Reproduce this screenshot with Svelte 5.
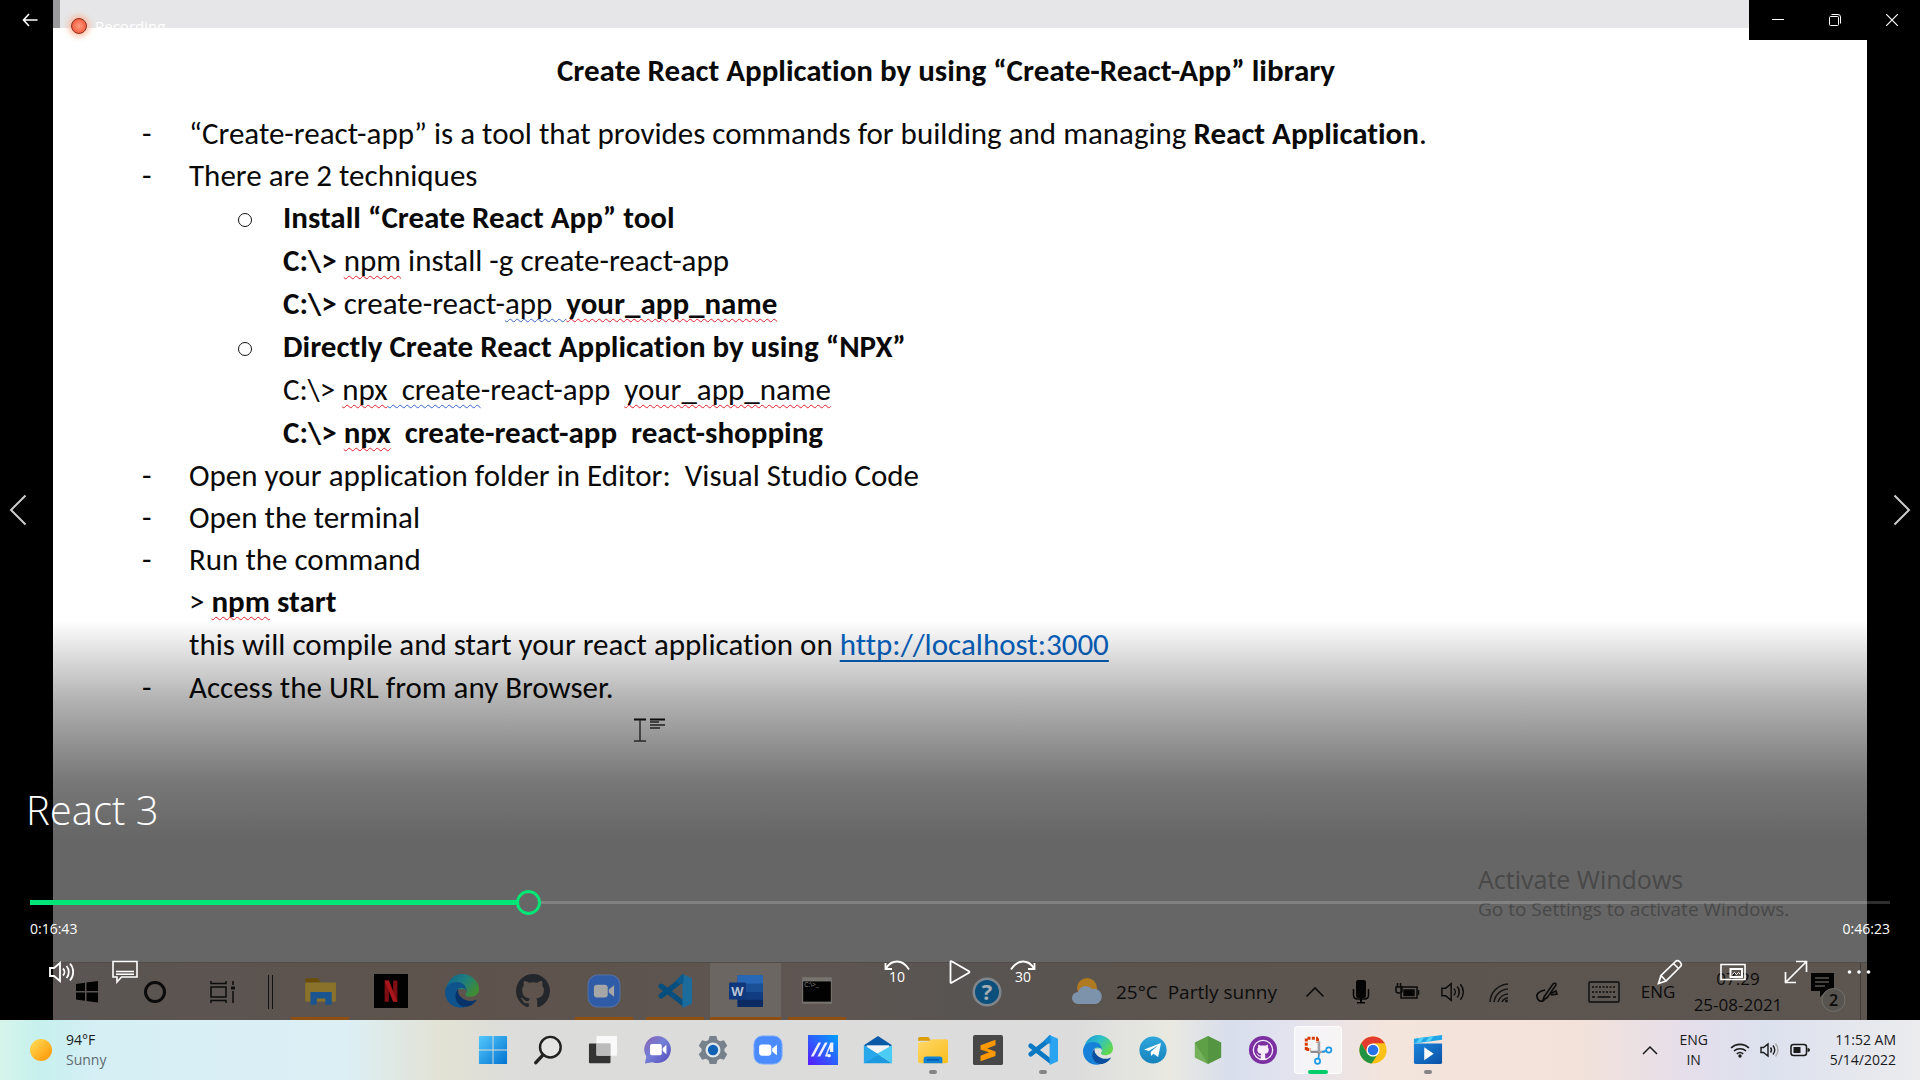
<script>
  let position = $state(265);
  const fill = $derived(position / 10);

  const apps = [
    { id: 'start', label: 'Start' },
    { id: 'search', label: 'Search' },
    { id: 'taskview', label: 'Task View' },
    { id: 'chat', label: 'Chat' },
    { id: 'settings', label: 'Settings' },
    { id: 'zoom', label: 'Zoom' },
    { id: 'myasus', label: 'MyASUS' },
    { id: 'mail', label: 'Mail' },
    { id: 'folder', label: 'File Explorer', open: true },
    { id: 'sublime', label: 'Sublime Text' },
    { id: 'vscode', label: 'Visual Studio Code', open: true },
    { id: 'edge', label: 'Microsoft Edge' },
    { id: 'telegram', label: 'Telegram' },
    { id: 'node', label: 'Node.js' },
    { id: 'github', label: 'GitHub Desktop' },
    { id: 'snip', label: 'Snipping Tool', active: true },
    { id: 'chrome', label: 'Google Chrome' },
    { id: 'movies', label: 'Movies & TV', open: true }
  ];

  const recordedApps = [
    { id: 'folder', open: true },
    { id: 'netflix' },
    { id: 'edge' },
    { id: 'githubmark' },
    { id: 'zoom', open: true },
    { id: 'vscode', open: true },
    { id: 'word', active: true },
    { id: 'cmd', open: true }
  ];
</script>

{#snippet icon(id)}
  <svg class="app-icon" viewBox="0 0 32 32" aria-hidden="true">
    {#if id === 'start'}
      <g fill="url(#g-start)"><path d="M1 2q0-1 1-1h13.500v14.500H1z" /><path d="M16.500 1H30q1 0 1 1v13.500H16.500z" /><path d="M1 16.500h14.500V31H2q-1 0-1-1z" /><path d="M16.500 16.500H31V30q0 1-1 1H16.500z" /></g>
    {:else if id === 'search'}
      <circle cx="18.500" cy="13" r="11" fill="#fff" fill-opacity=".25" stroke="#222" stroke-width="2.600" /><path d="M10.500 21.500L3 29.500" stroke="#222" stroke-width="3.600" stroke-linecap="round" />
    {:else if id === 'taskview'}
      <rect x="1" y="9" width="23" height="21" rx="1" fill="#333" /><rect x="9" y="1" width="22" height="21" rx="1" fill="#fff" fill-opacity=".82" /><path d="M9 9h15v13H9z" fill="#bbb" />
    {:else if id === 'chat'}
      <path d="M16 1a14.500 14.500 0 1 1-6 28L2 30.500 3.500 23A14.500 14.500 0 0 1 16 1z" fill="url(#g-chat)" /><rect x="7.500" y="9.500" width="12.500" height="12" rx="2" fill="#fff" /><path d="M21 14l4-3.500v10L21 17z" fill="#fff" />
    {:else if id === 'settings'}
      <path d="M12.500 1h7l1.300 4.200 2.700 1.500 4.200-1.200 3.500 6-3 3.200v2.600l3 3.200-3.500 6-4.200-1.200-2.700 1.500L19.500 31h-7l-1.300-4.200-2.700-1.500-4.200 1.200-3.500-6 3-3.200v-2.600l-3-3.200 3.500-6 4.200 1.200 2.700-1.500z" fill="#76818b" /><circle cx="16" cy="16" r="8" fill="#dfe6ec" /><circle cx="16" cy="16" r="5.500" fill="#1062b4" />
    {:else if id === 'zoom'}
      <rect x="1" y="1" width="30" height="30" rx="9" fill="#4a8cff" stroke="#7eaeff" /><rect x="6.500" y="10" width="13" height="12" rx="3" fill="#fff" /><path d="M20.500 14.500l5-4v11l-5-4z" fill="#fff" />
    {:else if id === 'myasus'}
      <path d="M0 0h32v32H0z" fill="url(#g-asus)" /><path d="M3 23L11 8h3L6 23zM10 23L18 8h3L13 23zM18 23L24 8h3v10h-3.500v-4L21 19v4z" fill="#eef" /><circle cx="22.500" cy="22" r="1.800" fill="#fff" />
    {:else if id === 'mail'}
      <path d="M1 11L16 1l15 10-15 8z" fill="#0a5aa8" /><path d="M4 11h24v9H4z" fill="#f2f4f6" /><path d="M1 11v19h30z" fill="#1c9ae0" /><path d="M31 11v19L15 20z" fill="#4accf5" /><path d="M1 11l16 10L1 30z" fill="#28a8ea" />
    {:else if id === 'folder'}
      <path d="M0 4q0-2 2-2h9l3 4H0z" fill="#dd9d06" /><path d="M0 8l11-1 4-2.500h15q2 0 2 2V28q0 2-2 2H2q-2 0-2-2z" fill="url(#g-folder)" /><path d="M6 30v-4q0-3 3-3h14q3 0 3 3v4z" fill="#0c82d6" /><path d="M9.500 26.500h13" stroke="#07539c" stroke-width="1.400" />
    {:else if id === 'oldfolder'}
      <path d="M2 6q0-2 2-2h10l3 4H2z" fill="#6b4d08" /><path d="M2 8h29v18H2z" fill="#8a722a" /><path d="M7 29V17h20v12h-6v-6h-8v6z" fill="#1b5590" />
    {:else if id === 'sublime'}
      <rect width="32" height="32" rx="2" fill="#474747" /><path d="M8 11l16-6v6l-9 3.500 9 3v5L8 28v-6l9-3.500-9-3z" fill="#ff9800" />
    {:else if id === 'vscode'}
      <path d="M23.500 4.500L3 20.500M23.500 27.500L3 11.500" stroke="#0a78c2" stroke-width="5" stroke-linecap="round" /><path d="M23 0l9 4v24l-9 4z" fill="#2aa4f0" /><path d="M23 0l1 0v9l-5 0-2-3z" fill="#148ad8" />
    {:else if id === 'edge'}
      <path d="M1 15C1.500 7 8 0 16 0c9 0 16 7 16 14 0 5-4 7.500-8.500 7.500-3 0-4.500-1-4.500-2.500 1-1.500 2-2 1-5z" fill="url(#g-edge)" /><path d="M0 17c0-6 5-9.500 11-9.500 7 0 9.500 5 9 9-.5-2.500-2.500-3.500-4.500-3.500-4 0-6 4-5 8.500 1 5 5 8.500 9 9.500C9 34 0 27 0 17z" fill="#1780d8" /><path d="M12.500 14c-4 4-3.500 11 1 15 5 4 13 1.500 16.500-5-3 1.500-7 2-10.500.500-5-2-8-5.500-7-10.500z" fill="#0c4fa0" />
    {:else if id === 'telegram'}
      <circle cx="16" cy="16" r="14.500" fill="url(#g-tele)" /><path d="M6.500 15.500L24.500 8.500 21.500 23.500l-5-3.500-2.500 2.500-.5-4.500 8-7-10 6z" fill="#fff" />
    {:else if id === 'node'}
      <path d="M16 1l14 7v16l-14 7-14-7V8z" fill="#5da046" /><path d="M16 1l14 7v16l-14 7z" fill="#4a8a3a" fill-opacity=".5" /><path d="M2 8l14 23-14-7z" fill="#83bd68" fill-opacity=".6" />
    {:else if id === 'github'}
      <circle cx="16" cy="16" r="15" fill="#7b2fa0" /><circle cx="16" cy="16" r="11" fill="#f6ecfa" /><g transform="translate(6.500 6.500) scale(1.190)">{@render cat('#7b2fa0')}</g>
    {:else if id === 'githubmark'}
      <g transform="scale(2)">{@render cat('#23272c')}</g>
    {:else if id === 'snip'}
      <path d="M3.500 16V3.500H16M3.500 15.500h5M15.500 3.500v5" fill="none" stroke="#d83b01" stroke-width="3.200" stroke-dasharray="3.200 1.400" /><path d="M17 7v14M8 18h15" stroke="#8a8d91" stroke-width="2.600" /><path d="M17 7v11h10" stroke="#b8bbbf" stroke-width="1" fill="none" /><circle cx="27.500" cy="16" r="2.800" fill="none" stroke="#1c9ae8" stroke-width="1.800" /><circle cx="15.500" cy="28" r="2.800" fill="none" stroke="#1c9ae8" stroke-width="1.800" /><path d="M16.500 25l.5-4M24.500 17l-4 1" stroke="#1c9ae8" stroke-width="1.800" />
    {:else if id === 'chrome'}
      <circle cx="16" cy="16" r="14.500" fill="#fbc116" /><path d="M3.400 8.800A14.500 14.500 0 0 1 28.600 8.800H16L10 19.500z" fill="#e33b2e" /><path d="M3.400 8.800L10 19.700 16 23l-3 7.200A14.500 14.500 0 0 1 3.400 8.800z" fill="#229342" /><path d="M10 19.500l6 3.500 4-1-5.500 8.400-3-.600z" fill="#229342" /><circle cx="16" cy="16" r="7" fill="#fff" /><circle cx="16" cy="16" r="5.600" fill="#2a72e8" />
    {:else if id === 'movies'}
      <path d="M1 9h30v20q0 2-2 2H3q-2 0-2-2z" fill="url(#g-movie)" /><path d="M1 4L31 0v5L1 9z" fill="#1fa5e8" /><path d="M7 3.200L12 2.500 8 8 3 8.700zM17 2L22 1.300 18 6.700l-5 .700z" fill="#53d0f8" /><path d="M12 13l10 7-10 7z" fill="#fff" />
    {:else if id === 'netflix'}
      <path d="M0 0h32v32H0z" fill="#030202" /><path d="M10 6h4v20h-4zM18 6h4v20h-4z" fill="#7f0d12" /><path d="M10 6h4l8 20h-4z" fill="#a8161c" />
    {:else if id === 'word'}
      <path d="M8 1h24v30H8z" fill="#1b4f96" /><path d="M8 1h24v8H8z" fill="#2867b5" /><path d="M8 17h24v7H8z" fill="#123c82" /><path d="M8 24h24v7H8z" fill="#0b2a62" /><rect y="8" width="16" height="16" rx="1" fill="#10387c" /><text x="8" y="20.500" text-anchor="middle" font-size="12" font-weight="700" fill="#b8c4d4">W</text>
    {:else if id === 'cmd'}
      <rect x="2" y="3" width="28" height="25" fill="#77736f" /><rect x="3" y="7" width="26" height="19" fill="#020202" /><text x="4" y="12" font-size="6" fill="#8d8d8d">C:\&gt;_</text>
    {/if}
  </svg>
{/snippet}

{#snippet cat(color)}
  <path fill={color} d="M8 0C3.580 0 0 3.580 0 8c0 3.540 2.290 6.530 5.470 7.590.4.070.55-.17.55-.38 0-.19-.01-.82-.01-1.490-2.010.37-2.530-.49-2.690-.94-.09-.23-.48-.94-.82-1.130-.28-.15-.68-.52-.01-.53.63-.01 1.080.58 1.230.82.72 1.210 1.870.87 2.330.66.07-.52.28-.87.51-1.070-1.780-.2-3.640-.89-3.640-3.950 0-.87.31-1.590.82-2.150-.08-.2-.36-1.020.08-2.120 0 0 .67-.21 2.200.82.64-.18 1.320-.27 2-.27s1.360.09 2 .27c1.530-1.040 2.200-.82 2.200-.82.44 1.100.16 1.920.08 2.120.51.56.82 1.270.82 2.150 0 3.070-1.870 3.750-3.650 3.950.29.25.54.73.54 1.480 0 1.070-.01 1.930-.01 2.200 0 .21.15.46.55.38A8.010 8.010 0 0 0 16 8c0-4.420-3.580-8-8-8z" />
{/snippet}

{#snippet speaker()}
  <path d="M1 9h4l6-5v18l-6-5H1z" /><path d="M14 9.500a5 5 0 0 1 0 7M17.500 7a9 9 0 0 1 0 12M21 4.500a13 13 0 0 1 0 17" />
{/snippet}

<svg class="defs" aria-hidden="true">
  <defs>
    <linearGradient id="g-start" gradientUnits="userSpaceOnUse" x1="0" y1="0" x2="32" y2="32"><stop offset="0" stop-color="#55cbff" /><stop offset="1" stop-color="#0070cf" /></linearGradient>
    <linearGradient id="g-chat" x1="0" y1="0" x2="1" y2="1"><stop offset="0" stop-color="#8a5fae" /><stop offset=".45" stop-color="#7480d8" /><stop offset="1" stop-color="#5348b8" /></linearGradient>
    <linearGradient id="g-asus" x1="0" y1="1" x2="1" y2="0"><stop offset="0" stop-color="#5a1aff" /><stop offset="1" stop-color="#00a2ff" /></linearGradient>
    <linearGradient id="g-folder" x1="0" y1="0" x2="1" y2="1"><stop offset="0" stop-color="#ffd96a" /><stop offset="1" stop-color="#f9bd1e" /></linearGradient>
    <linearGradient id="g-edge" x1="0" y1="0" x2="1" y2=".6"><stop offset="0" stop-color="#1990d8" /><stop offset=".5" stop-color="#2cc0c8" /><stop offset="1" stop-color="#62d84e" /></linearGradient>
    <linearGradient id="g-tele" x1="0" y1="0" x2="0" y2="1"><stop offset="0" stop-color="#2fa6dc" /><stop offset="1" stop-color="#1682bc" /></linearGradient>
    <linearGradient id="g-movie" x1="0" y1="0" x2="1" y2="1"><stop offset="0" stop-color="#1a84dc" /><stop offset="1" stop-color="#0b51a6" /></linearGradient>
    <linearGradient id="g-sun" x1="0" y1="0" x2="1" y2="1"><stop offset="0" stop-color="#ffdf5a" /><stop offset="1" stop-color="#ff9200" /></linearGradient>
  </defs>
</svg>

<div class="desktop">
  <main class="stage">
    <article class="document">
      <div class="ribbon"></div>
      <div class="page">
        <h1>Create React Application by using “Create-React-App” library</h1>
        <ul class="outline">
          <li>“Create-react-app” is a tool that provides commands for building and managing <b>React Application</b>.</li>
          <li>There are 2 techniques
            <ul class="sub">
              <li><b>Install “Create React App” tool</b>
                <p><b>C:\&gt;</b> <span class="typo">npm</span> install -g create-react-app</p>
                <p><b>C:\&gt;</b> create-react-<span class="grammar">app&nbsp;&nbsp;</span><b class="typo">your_app_name</b></p>
              </li>
              <li><b>Directly Create React Application by using “NPX”</b>
                <p>C:\&gt; <span class="typo">npx</span><span class="grammar">&nbsp; create</span>-react-app&nbsp; <span class="typo">your_app_name</span></p>
                <p><b>C:\&gt; <span class="typo">npx</span>&nbsp; create-react-app&nbsp; react-shopping</b></p>
              </li>
            </ul>
          </li>
          <li>Open your application folder in Editor:&nbsp; Visual Studio Code</li>
          <li>Open the terminal</li>
          <li>Run the command
            <p>&gt; <b><span class="typo">npm</span> start</b></p>
            <p>this will compile and start your react application on <a href="http://localhost:3000">http://localhost:3000</a></p>
          </li>
          <li>Access the URL from any Browser.</li>
        </ul>
      </div>
      <div class="recording"><span class="rec-dot"></span>Recording</div>
      <svg class="caret" viewBox="0 0 32 26" aria-hidden="true"><path d="M0 1.500h12M16 1.500h15" stroke="#111" stroke-width="2" /><path d="M6 2v21M0 23h12" stroke="#444" stroke-width="1.500" /><path d="M16 4h9M16 7h15M16 10h10" stroke="#333" stroke-width="1.300" /></svg>
    </article>

    <div class="shade"></div>

    <section class="recorded" aria-label="Recorded desktop">
      <div class="watermark"><strong>Activate Windows</strong><span>Go to Settings to activate Windows.</span></div>
      <div class="recbar">
        <span class="cell sys"><svg width="24" height="24" viewBox="0 0 24 24"><path d="M1 4l9-1.300V11H1zM11.500 2.500L23 1v10H11.500zM1 12.500h9v8.300L1 19.500zM11.500 12.500H23v10L11.500 21z" fill="#020202" /></svg></span>
        <span class="cell sys"><svg width="24" height="24" viewBox="0 0 24 24"><circle cx="12" cy="12" r="9.500" fill="none" stroke="#0a0a0a" stroke-width="3" /></svg></span>
        <span class="cell sys"><svg width="26" height="24" viewBox="0 0 26 24" fill="none" stroke="#0c0c0c" stroke-width="1.500"><path d="M1 7h15v10H1zM1 1v2.500h15V1M1 23v-2.500h15V23M23 1v4M23 11v12" /><path d="M21 8h4" stroke-width="3" /></svg></span>
        <span class="cell divider"></span>
        {#each recordedApps as app}
          <span class="cell rec-app {app.id}" class:open={app.open} class:active={app.active}>{@render icon(app.id === 'folder' ? 'oldfolder' : app.id)}</span>
        {/each}
        <span class="cell help"><svg width="32" height="32" viewBox="0 0 32 32"><circle cx="16" cy="16" r="14.500" fill="#80878c" /><circle cx="16" cy="16" r="12" fill="#0b4f7c" /><text x="16" y="24" text-anchor="middle" font-size="22" font-weight="700" fill="#a6adb3">?</text></svg></span>
        <span class="cell forecast"><svg width="32" height="32" viewBox="0 0 32 32"><circle cx="16" cy="12" r="10" fill="#b07a20" /><path d="M7 28a6 6 0 0 1 0-12 8 8 0 0 1 14-3 7 7 0 0 1 4 15z" fill="#7d93ab" /></svg>25°C&nbsp; Partly sunny</span>
        <span class="cell tray"><svg width="20" height="12" viewBox="0 0 20 12" fill="none" stroke="#0c0c0c" stroke-width="1.600"><path d="M1.500 10.500L10 2l8.500 8.500" /></svg></span>
        <span class="cell tray"><svg width="18" height="24" viewBox="0 0 18 24" fill="#050505"><rect x="4" width="10" height="18" rx="2" /><path d="M1.500 9v6q0 4 4 4h7q4 0 4-4V9" fill="none" stroke="#050505" stroke-width="1.500" /><path d="M8 18h2v5H8zM5 22h8v1.500H5z" /></svg></span>
        <span class="cell tray"><svg width="26" height="20" viewBox="0 0 26 20" fill="none" stroke="#0a0a0a" stroke-width="1.500"><rect x="7" y="5" width="16" height="11" /><path d="M24.500 8v5" /><path d="M10 8h10v5.500H10z" fill="#050505" /><path d="M2 5v4q0 2 3 2t3-2V5zM3.500 1v4M6.500 1v4" /></svg></span>
        <span class="cell tray"><svg width="26" height="24" viewBox="0 0 26 26" fill="none" stroke="#0c0c0c" stroke-width="1.600">{@render speaker()}</svg></span>
        <span class="cell tray"><svg width="22" height="22" viewBox="0 0 22 22" fill="none" stroke="#141414" stroke-width="1.600"><path d="M2 21A19 19 0 0 1 20 3M6 21A15 15 0 0 1 20 8M10 21A11 11 0 0 1 20 13M14 21a7 7 0 0 1 6-4" /><circle cx="18.500" cy="20" r="1.500" fill="#141414" stroke="none" /></svg></span>
        <span class="cell pen"><svg width="24" height="22" viewBox="0 0 24 22" fill="none" stroke="#0c0c0c" stroke-width="1.600"><path d="M9 16L18 3q3-2 3 1l-9 13-4 2zM10 9q-9 2-8 7 1 5 6 4l4-4M15 13l6-3 1 3-6 1" /></svg></span>
        <span class="cell keyboard"><svg width="32" height="22" viewBox="0 0 32 22" fill="none" stroke="#0c0c0c" stroke-width="1.400"><rect x="1" y="1" width="30" height="20" rx="1" /><path d="M4 6h24M4 11h24" stroke-dasharray="2 1.500" /><path d="M4 16h3M9.500 16h13M25 16h3" /></svg></span>
        <span class="cell lang">ENG</span>
        <span class="cell rec-clock"><span>07:29</span><span>25-08-2021</span></span>
        <span class="cell notice"><svg width="36" height="44" viewBox="0 0 36 44"><path d="M1 3h23v18h-8l-6 6v-6H1z" fill="#030303" /><path d="M5 8h14M5 12h14M5 16h10" stroke="#5a5552" stroke-width="1.300" /><circle cx="23.500" cy="30" r="11.500" fill="#57534f" stroke="#74706c" /><text x="23.500" y="35.500" text-anchor="middle" font-size="16" font-weight="600" fill="#0a0a0a">2</text></svg></span>
        <span class="cell corner"></span>
      </div>
    </section>

    <header class="topbar">
      <button class="back" aria-label="Back"><svg width="16" height="14" viewBox="0 0 16 14" fill="none" stroke="#fff" stroke-width="1.600"><path d="M15.500 7H1.500M7 1L1.500 7 7 13" /></svg></button>
      <div class="window-controls">
        <button aria-label="Minimise"><svg width="12" height="12" viewBox="0 0 12 12"><path d="M0 5.500h12" stroke="#fff" stroke-width="1" /></svg></button>
        <button aria-label="Restore"><svg width="12" height="12" viewBox="0 0 12 12" fill="none" stroke="#fff" stroke-width="1"><rect x=".5" y="2.500" width="9" height="9" rx="1" /><path d="M2.500.5h6.500q2.500 0 2.500 2.500V9.500" /></svg></button>
        <button aria-label="Close"><svg width="12" height="12" viewBox="0 0 12 12" stroke="#fff" stroke-width="1.200"><path d="M0 0l12 12M12 0L0 12" /></svg></button>
      </div>
    </header>

    <nav class="flip" aria-label="Videos">
      <button aria-label="Previous"><svg width="18" height="32" viewBox="0 0 18 32" fill="none" stroke="#ccc" stroke-width="2"><path d="M16.500 1.500L2 16l14.500 14.500" /></svg></button>
      <button aria-label="Next"><svg width="18" height="32" viewBox="0 0 18 32" fill="none" stroke="#ccc" stroke-width="2"><path d="M1.500 1.500L16 16 1.500 30.500" /></svg></button>
    </nav>

    <section class="player" aria-label="Player">
      <h2>React 3</h2>
      <input class="seek" type="range" min="0" max="1000" aria-label="Seek" bind:value={position} style="--fill: {fill}%" />
      <div class="times"><time>0:16:43</time><time>0:46:23</time></div>
      <div class="controls">
        <div class="group">
          <button aria-label="Volume"><svg width="26" height="26" viewBox="0 0 26 26" fill="none" stroke="#fff" stroke-width="1.800">{@render speaker()}</svg></button>
          <button aria-label="Captions"><svg width="26" height="24" viewBox="0 0 26 24" fill="none" stroke="#fff" stroke-width="1.600"><path d="M1 1.500h24v15.500H9.500L5 22v-5H1zM4 11.500h18M4 14.200h18" /></svg></button>
        </div>
        <div class="group">
          <button class="skip" aria-label="Skip back 10 seconds"><svg width="26" height="10" viewBox="0 0 26 10" fill="none" stroke="#fff" stroke-width="1.800"><path d="M1.500 3v6h6.500M2 8.500Q6 1.500 13 1.500T25 9.500" /></svg><span>10</span></button>
          <button aria-label="Play"><svg width="22" height="24" viewBox="0 0 22 24" fill="none" stroke="#fff" stroke-width="1.800" stroke-linejoin="round"><path d="M1.500 2q0-1.500 1.500-.5L20 11.300q1 .700 0 1.400L3 22.500q-1.500 1-1.500-.5z" /></svg></button>
          <button class="skip" aria-label="Skip forward 30 seconds"><svg width="26" height="10" viewBox="0 0 26 10" fill="none" stroke="#fff" stroke-width="1.800"><path d="M24.500 3v6H18M24 8.500Q20 1.500 13 1.500T1 9.500" /></svg><span>30</span></button>
        </div>
        <div class="group end">
          <button aria-label="Edit"><svg width="26" height="26" viewBox="0 0 26 26" fill="none" stroke="#fff" stroke-width="1.700"><path d="M1.500 24.500L4 16.500 18.500 2.500q2-2 4.500.5t.5 4.500L9 22zM4 16.500L9 22M16.500 4.500l5 5" /></svg></button>
          <button aria-label="Play in mini view"><svg width="26" height="18" viewBox="0 0 26 18" fill="none" stroke="#fff" stroke-width="1.600"><path d="M1 1.500h24v15H1z" /><path d="M10.500 6h11.500v8H10.500z" stroke-width="2" /><path d="M12 11.500l2.500-2 2 2 2-2 1.500 1.500" stroke-width="1" /></svg></button>
          <button aria-label="Full screen"><svg width="24" height="24" viewBox="0 0 24 24" fill="none" stroke="#fff" stroke-width="1.700"><path d="M1.500 22.500l21-21M12 1.500h10.500V12M1.500 12v10.500H12" /></svg></button>
          <button aria-label="More"><svg width="24" height="6" viewBox="0 0 24 6" fill="#fff"><circle cx="2.500" cy="3" r="1.800" /><circle cx="12" cy="3" r="1.800" /><circle cx="21.500" cy="3" r="1.800" /></svg></button>
        </div>
      </div>
    </section>
  </main>

  <footer class="taskbar">
    <button class="weather"><svg width="24" height="24" viewBox="0 0 24 24" aria-hidden="true"><circle cx="12" cy="12" r="11" fill="url(#g-sun)" /></svg><span class="stack"><span>94°F</span><span class="muted">Sunny</span></span></button>
    <div class="apps">
      {#each apps as app}
        <button aria-label={app.label} class:open={app.open} class:active={app.active}><span class="tile">{@render icon(app.id)}</span></button>
      {/each}
    </div>
    <div class="status">
      <button aria-label="Hidden icons"><svg width="16" height="10" viewBox="0 0 16 10" fill="none" stroke="#1a1a1a" stroke-width="1.500"><path d="M1 9l7-7 7 7" /></svg></button>
      <button class="stack center language"><span>ENG</span><span>IN</span></button>
      <button class="quick" aria-label="Network, volume and battery">
        <svg width="20" height="16" viewBox="0 0 20 16" fill="none" stroke="#1a1a1a" stroke-width="1.600"><path d="M1 6a13 13 0 0 1 18 0M4 9a9 9 0 0 1 12 0M6.800 11.800a5 5 0 0 1 6.400 0" /><circle cx="10" cy="14" r="1.700" fill="#1a1a1a" stroke="none" /></svg>
        <svg width="20" height="16" viewBox="0 0 20 16" fill="none" stroke="#1a1a1a" stroke-width="1.400"><path d="M1 5.500h2.500L8 2v12l-4.500-3.500H1zM10.500 5.500q2 2.500 0 5M13 3.500q3.500 4.500 0 9" /><path d="M15.500 1.500q5 6.500 0 13" stroke="#aaa" /></svg>
        <svg width="20" height="14" viewBox="0 0 20 14"><rect x="1" y="1.500" width="15.500" height="11" rx="2.500" fill="none" stroke="#1a1a1a" stroke-width="1.500" /><path d="M3.500 4h7v6h-7zM17.500 5q2.500 0 2.500 2t-2.500 2z" fill="#1a1a1a" /></svg>
      </button>
      <button class="stack right"><span>11:52 AM</span><span>5/14/2022</span></button>
    </div>
  </footer>
</div>

<style>
  :global(body) { margin: 0; background: #000; }
  .desktop { display: grid; grid-template-rows: 1fr auto; min-height: 100vh; font-family: "Open Sans", "Noto Sans", sans-serif; font-size: 14px; line-height: 20px; }
  .defs { position: absolute; width: 0; height: 0; }
  button { border: 0; padding: 0; background: none; color: inherit; font: inherit; display: flex; align-items: center; justify-content: center; }
  .stage { display: grid; background: #000; }
  .stage > * { grid-area: 1 / 1; min-width: 0; z-index: 1; }

  .stage > .document { z-index: 0; }
  .document { position: relative; margin: 0 53px; background: #fff; color: #0a0a0a; font-family: Carlito, Lato, sans-serif; font-size: 31px; line-height: 42px; font-variant-ligatures: none; }
  .ribbon { height: 28px; background: #e6e6e8; border-left: 7px solid #9a9a9c; box-sizing: border-box; }
  .page { padding: 21px 117px 0 89px; }
  h1 { margin: 0 0 21px; font-size: 31px; line-height: 42px; text-align: center; }
  ul { list-style: none; margin: 0; padding: 0; }
  p { margin: 0; line-height: 43px; }
  .outline > li { position: relative; padding-left: 47px; }
  .outline > li::before { content: "-"; position: absolute; left: 0; }
  .sub { line-height: 43px; }
  .sub > li { position: relative; padding-left: 94px; }
  .sub > li::before { content: ""; position: absolute; left: 49px; top: 17px; width: 12px; height: 12px; border: 1px solid #111; border-radius: 50%; }
  .typo, .grammar { text-decoration: underline wavy #e0242c 1px; text-underline-offset: 4px; text-decoration-skip-ink: none; }
  .grammar { text-decoration-color: #3a66cc; }
  .document a { color: #0563c1; text-decoration-thickness: 2px; text-underline-offset: 5px; text-decoration-skip-ink: none; }
  .recording { position: absolute; left: 18px; top: 14px; display: flex; align-items: center; gap: 8px; color: #fff; font: 15px/24px "Open Sans", sans-serif; }
  .rec-dot { width: 14px; height: 14px; border: 1px solid #8c2a18; border-radius: 50%; background: radial-gradient(#ff9d80, #f0472a); box-shadow: 0 0 6px 2px #ffb08f; }
  .caret { position: absolute; left: 581px; top: 718px; width: 32px; height: 26px; }
  .shade { margin: 0 53px; background: linear-gradient(to top, rgb(0 0 0 / .6) 182px, rgb(0 0 0 / .53) 240px, rgb(0 0 0 / .42) 280px, rgb(0 0 0 / .3) 320px, rgb(0 0 0 / 0) 400px); }

  .recorded { align-self: end; margin: 0 53px; }
  .watermark { display: flex; flex-direction: column; align-items: start; width: 389px; margin: 0 0 39px auto; color: #484848; font-size: 19px; line-height: 28px; }
  .watermark strong { font-size: 25px; font-weight: 400; line-height: 32px; }
  .recbar { display: flex; height: 58px; background: linear-gradient(90deg, #5a5553, #5e534c 24%, #5e5652 42%, #585452 50%, #5c544e 62%, #5d5650); border-top: 1px solid #4f4c4a; box-sizing: border-box; color: #0c0c0c; font-size: 17px; }
  .cell { display: flex; align-items: center; justify-content: center; flex: none; }
  .sys { width: 68px; }
  .divider { width: 27px; }
  .divider::before { content: ""; width: 3px; height: 34px; border: solid #111; border-width: 0 1px; }
  .rec-app { width: 71px; box-sizing: border-box; padding-bottom: 1px; }
  .rec-app :global(.app-icon) { width: 34px; height: 34px; }
  .edge :global(svg), .zoom :global(svg), .vscode :global(svg) { filter: brightness(.65); }
  .open.rec-app { background: linear-gradient(#8f4e12, #8f4e12) center bottom / 58px 3px no-repeat; }
  .active.rec-app { background: linear-gradient(#8f4e12, #8f4e12) center bottom / 100% 3px no-repeat, #6b6661; }
  .help { width: 54px; margin-left: auto; }
  .forecast { width: 278px; gap: 13px; padding-left: 42px; box-sizing: border-box; font-size: 19px; }
  .tray { width: 46px; }
  .pen { width: 50px; }
  .keyboard { width: 64px; }
  .lang { width: 44px; }
  .rec-clock { width: 116px; flex-direction: column; line-height: 26px; }
  .notice { width: 64px; }
  .corner { width: 7px; box-sizing: border-box; border-left: 1px solid #3d3a38; }

  .topbar { align-self: start; display: flex; justify-content: space-between; }
  .back { width: 60px; height: 40px; }
  .window-controls { display: flex; background: #000; }
  .window-controls button { width: 57px; height: 40px; }
  .flip { align-self: center; display: flex; justify-content: space-between; padding: 0 9px; }

  .player { align-self: end; padding: 0 30px 18px; color: #fff; }
  h2 { margin: 0 0 50px -4px; font-size: 40px; line-height: 60px; font-weight: 300; }
  .seek { appearance: none; display: block; width: 100%; height: 25px; margin: 0; background: none; }
  .seek::-webkit-slider-runnable-track { height: 5px; background: linear-gradient(#00e676, #00e676) 0 0 / var(--fill) 5px no-repeat, linear-gradient(rgb(255 255 255 / .18), rgb(255 255 255 / .18)) 0 1px / 100% 3px no-repeat; }
  .seek::-webkit-slider-thumb { appearance: none; width: 25px; height: 25px; margin-top: -10px; box-sizing: border-box; border: 3px solid #00e676; border-radius: 50%; background: #666; }
  .times { display: flex; justify-content: space-between; line-height: 27px; }
  .controls { display: grid; grid-template-columns: 1fr auto 1fr; }
  .group { display: flex; }
  .end { justify-content: end; }
  .controls button { width: 63px; height: 60px; }
  .controls .skip { flex-direction: column; line-height: 14px; }

  .taskbar { display: grid; grid-template-columns: 1fr auto 1fr; height: 60px; color: #1a1a1a; background: linear-gradient(90deg, #d6f5ea, #c6f0ee 2%, #d5eff5 5%, #dceff5 18%, #e2e2d4 23%, #dcdcdb 27%, #dcdcdc 56%, #e9e9e2 61%, #d8deec 64%, #e2e3ef 67%, #f3e4dc 72%, #f3e2d9 82%, #e5deeb 88%, #dce1ee 92%, #ececee); }
  .weather { justify-self: start; gap: 13px; padding-left: 29px; }
  .stack { display: flex; flex-direction: column; align-items: start; justify-content: center; }
  .muted { color: #5f6a70; }
  .apps { display: flex; }
  .apps button { position: relative; width: 55px; }
  .tile { display: flex; align-items: center; justify-content: center; width: 48px; height: 48px; box-sizing: border-box; border-radius: 4px; }
  .app-icon { width: 30px; height: 30px; display: block; }
  .apps .active .tile { background: rgb(255 255 255 / .6); border: 1px solid rgb(255 255 255 / .7); }
  .apps .open::after, .apps .active::after { content: ""; position: absolute; bottom: 6px; width: 8px; height: 4px; border-radius: 2px; background: #858585; }
  .apps .active::after { width: 20px; background: #00cc6a; }
  .status { display: flex; justify-content: end; padding-right: 24px; }
  .center { align-items: center; }
  .right { align-items: end; }
  .language { width: 72px; }
  .quick { gap: 10px; margin-right: 20px; }
</style>
